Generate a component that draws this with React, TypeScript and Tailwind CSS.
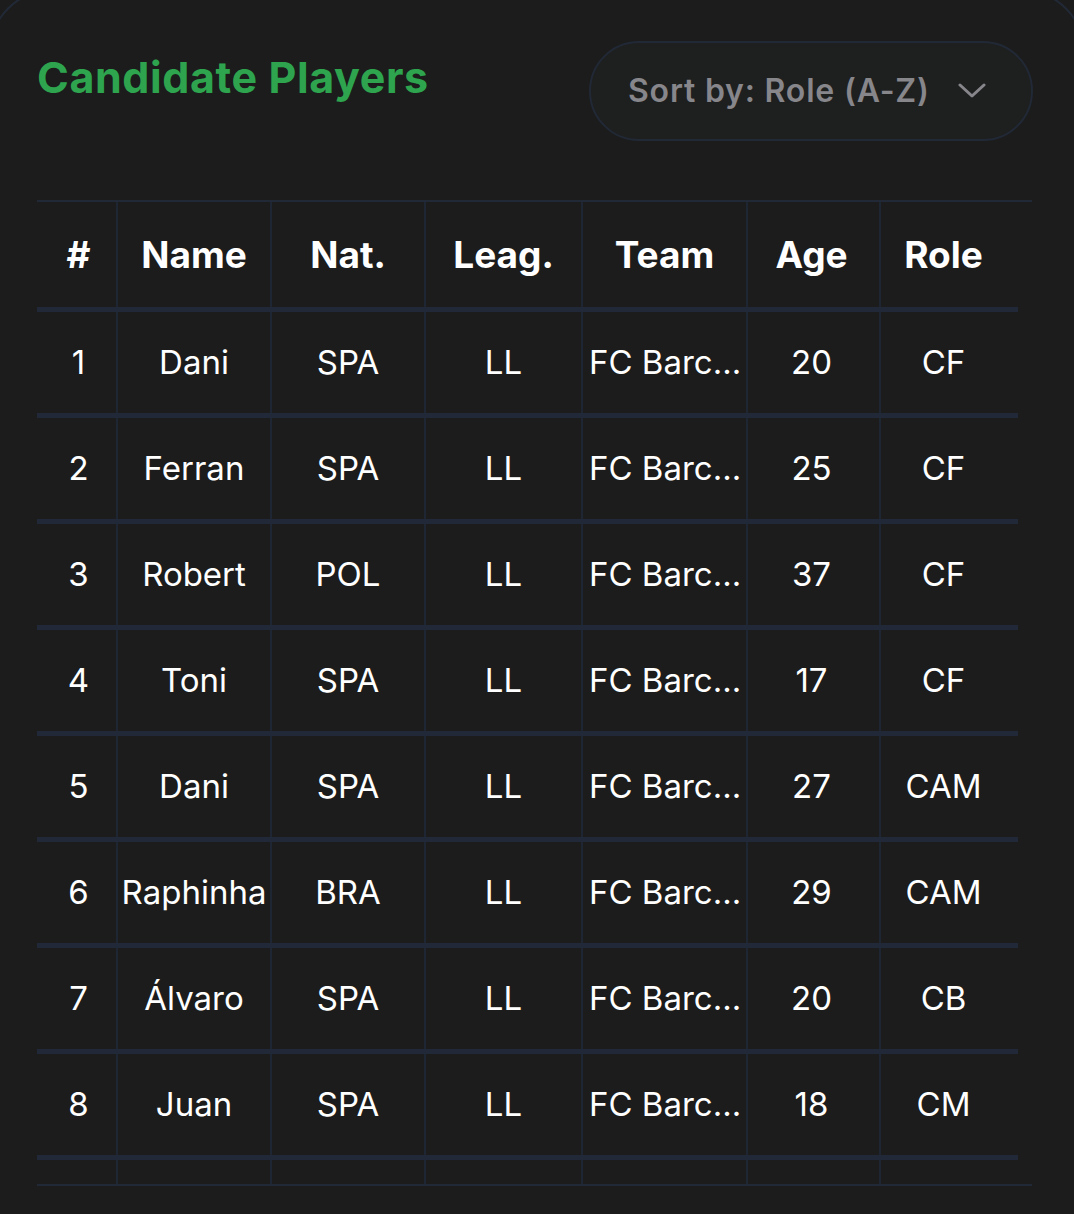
import { ReactNode } from 'react'

type Player = { name: string; nat: string; league: string; team: string; age: number; role: string }

const PLAYERS: Player[] = [
  { name: 'Dani',     nat: 'SPA', league: 'LL', team: 'FC Barcelona', age: 20, role: 'CF' },
  { name: 'Ferran',   nat: 'SPA', league: 'LL', team: 'FC Barcelona', age: 25, role: 'CF' },
  { name: 'Robert',   nat: 'POL', league: 'LL', team: 'FC Barcelona', age: 37, role: 'CF' },
  { name: 'Toni',     nat: 'SPA', league: 'LL', team: 'FC Barcelona', age: 17, role: 'CF' },
  { name: 'Dani',     nat: 'SPA', league: 'LL', team: 'FC Barcelona', age: 27, role: 'CAM' },
  { name: 'Raphinha', nat: 'BRA', league: 'LL', team: 'FC Barcelona', age: 29, role: 'CAM' },
  { name: 'Álvaro',   nat: 'SPA', league: 'LL', team: 'FC Barcelona', age: 20, role: 'CB' },
  { name: 'Juan',     nat: 'SPA', league: 'LL', team: 'FC Barcelona', age: 18, role: 'CM' },
]

// column widths include the 2px right border
const COLS = ['w-[81px] pl-[4px]', 'w-[154px]', 'w-[154px]', 'w-[157px]', 'w-[165px]', 'w-[133px] pr-[4px]', 'w-[137px] pr-[12px]']
const HEADERS = ['#', 'Name', 'Nat.', 'Leag.', 'Team', 'Age', 'Role']

const short = (s: string, n = 7) => (s.length > n ? s.slice(0, n) + '...' : s)

function Cell({ i, children, left }: { i: number; children?: ReactNode; left?: boolean }) {
  return (
    <div
      className={`${COLS[i]} shrink-0 h-full flex items-center overflow-hidden whitespace-nowrap ${
        i < COLS.length - 1 ? 'border-r-2 border-[#1f2633]' : ''
      } ${left ? 'justify-start pl-[6px]' : 'justify-center'}`}
    >
      {children}
    </div>
  )
}

export default function App() {
  return (
    <div
      className="w-[1074px] h-[1214px] overflow-hidden bg-[#1b1c1b]"
      style={{ fontFamily: 'Inter, "Noto Sans", sans-serif' }}
    >
      <div className="-mx-[10px] -mt-[10px] h-[1260px] rounded-[60px] border-2 border-[#222936] bg-[#1b1c1b] px-[45px]">
        <div className="flex items-start justify-between">
          <h1 className="mt-[59px] text-[43px] leading-[52px] font-bold text-[#2ea44f] tracking-[0.6px]">
            Candidate Players
          </h1>
          <button className="mt-[49px] mr-[4px] h-[100px] w-[444px] rounded-full border-2 border-[#222936] bg-[#1e1f1f] flex items-center pl-[37px] gap-[28px]">
            <span className="text-[32px] font-semibold text-[#86868b] tracking-[0.8px]">Sort by: Role (A-Z)</span>
            <svg width="28" height="16" viewBox="0 0 28 16" fill="none">
              <polyline points="2,2 14,13 26,2" stroke="#86868b" strokeWidth="3" strokeLinecap="round" strokeLinejoin="round" />
            </svg>
          </button>
        </div>

        <div className="mt-[59px] w-[995px] h-[986px] overflow-hidden border-y-2 border-[#222936]">
          <div className="w-[981px] text-white">
            <div className="flex h-[110px] border-b-[5px] border-[#212938] text-[37px] font-bold">
              {HEADERS.map((h, i) => (
                <Cell key={h} i={i}>{h}</Cell>
              ))}
            </div>
            {PLAYERS.map((p, idx) => (
              <div key={idx} className="flex h-[106px] border-b-[5px] border-[#212938] text-[33px] font-normal">
                <Cell i={0}>{idx + 1}</Cell>
                <Cell i={1}>{p.name}</Cell>
                <Cell i={2}>{p.nat}</Cell>
                <Cell i={3}>{p.league}</Cell>
                <Cell i={4} left>{short(p.team)}</Cell>
                <Cell i={5}>{p.age}</Cell>
                <Cell i={6}>{p.role}</Cell>
              </div>
            ))}
            {/* next row, scrolled out of view */}
            <div className="flex h-[106px]">
              {COLS.map((_, i) => (
                <Cell key={i} i={i} />
              ))}
            </div>
          </div>
        </div>
      </div>
    </div>
  )
}
